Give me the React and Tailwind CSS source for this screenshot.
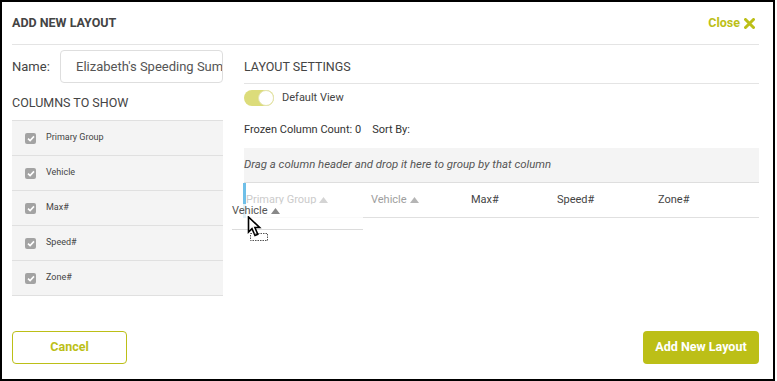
import React from "react";

const OLIVE = "#bcbf17";

function Check() {
  return (
    <span className="w-[11px] h-[11px] rounded-[2px] bg-[#a3a3a3] flex items-center justify-center shrink-0">
      <svg width="8" height="7" viewBox="0 0 8 7">
        <path d="M1 3.6 L3.1 5.6 L7 1.4" stroke="#fff" strokeWidth="1.6" fill="none" />
      </svg>
    </span>
  );
}

function Tri({ color }) {
  return (
    <svg width="9" height="6" viewBox="0 0 9 6" className="ml-[3px]">
      <path d="M0 6 L4.5 0 L9 6 Z" fill={color} />
    </svg>
  );
}

export default function App() {
  const cols = ["Primary Group", "Vehicle", "Max#", "Speed#", "Zone#"];
  return (
    <div className="w-[775px] h-[381px] border-2 border-black bg-white font-['Roboto',sans-serif] flex flex-col">
      {/* header */}
      <div className="ml-[10px] mr-[14px] h-[43px] shrink-0 flex items-center justify-between border-b border-[#e4e4e4]">
        <span className="text-[12.5px] font-bold text-[#444]">ADD NEW LAYOUT</span>
        <span className="flex items-center gap-[4px] pr-[4px] text-[12.5px] font-bold text-[#bcbf17]">
          Close
          <svg width="11" height="11" viewBox="0 0 11 11">
            <path d="M1.5 1.5 L9.5 9.5 M9.5 1.5 L1.5 9.5" stroke={OLIVE} strokeWidth="3" strokeLinecap="round" />
          </svg>
        </span>
      </div>

      {/* body */}
      <div className="ml-[10px] mr-[14px] flex gap-[21px]">
        {/* left */}
        <div className="w-[211px] shrink-0">
          <div className="pt-[5px] flex items-center">
            <span className="w-[48px] text-[13px] text-[#444]">Name:</span>
            <div className="w-[163px] h-[33px] rounded-[4px] border border-[#dedede] pl-[15px] flex items-center overflow-hidden whitespace-nowrap text-[13px] text-[#555]">
              Elizabeth's Speeding Summary
            </div>
          </div>
          <div className="mt-[13px] mb-[10px] text-[12.5px] leading-[14px] text-[#444]">COLUMNS TO SHOW</div>
          <div className="bg-[#f4f4f4] border-t border-[#e0e0e0]">
            {cols.map((c) => (
              <div key={c} className="h-[35px] border-b border-[#e0e0e0] flex items-center pl-[13px] gap-[10px]">
                <Check />
                <span className="text-[9px] text-[#444]">{c}</span>
              </div>
            ))}
          </div>
        </div>

        {/* right */}
        <div className="flex-1">
          <div className="pt-[15px] pb-[9px] border-b border-[#e4e4e4] text-[12.5px] leading-[14px] text-[#444]">
            LAYOUT SETTINGS
          </div>
          <div className="mt-[6px] h-[16px] flex items-center gap-[8px]">
            <span className="w-[30px] h-[16px] rounded-full bg-[#dcdc7a] relative">
              <span className="absolute right-0 top-0 w-[16px] h-[16px] rounded-full bg-white border border-[#e4e4b0]" />
            </span>
            <span className="text-[11px] text-[#444]">Default View</span>
          </div>
          <div className="mt-[18px] leading-[12px] text-[11px] text-[#333] flex gap-[11px]">
            <span>Frozen Column Count: 0</span>
            <span>Sort By:</span>
          </div>
          <div className="mt-[12px] h-[35px] bg-[#f4f4f4] border-b border-[#dedede] flex items-center">
            <span className="text-[11.4px] italic text-[#555]">
              Drag a column header and drop it here to group by that column
            </span>
          </div>
          <div className="relative h-[35px] border-b border-[#e0e0e0] flex items-center text-[11px]">
            <span className="self-start w-[3px] -ml-[1px] h-[35px] bg-[#6fbfe8]" />
            <span className="w-[125px] flex items-center text-[#cbcbcb]">
              Primary Group <Tri color="#d4d4d4" />
            </span>
            <span className="w-[100px] flex items-center text-[#9e9e9e]">
              Vehicle <Tri color="#b5b5b5" />
            </span>
            <span className="w-[86px] text-[#444]">Max#</span>
            <span className="w-[101px] text-[#444]">Speed#</span>
            <span className="text-[#444]">Zone#</span>

            {/* drag ghost */}
            <div className="absolute left-[-12px] top-[21px] w-[131px] h-[26px] pt-[1px] bg-white/80 border-b border-[#dcdcdc]">
              <span className="flex items-center text-[11px] leading-[12px] text-[#555]">
                Vehicle <Tri color="#888" />
              </span>
            </div>
            {/* cursor */}
            <svg className="absolute left-[3px] top-[33px]" width="26" height="26" viewBox="0 0 26 26">
              <path d="M1.5 1 L1.5 16 L5 12.6 L8 19.5 L10.8 18.3 L7.9 11.5 L12.6 11.5 Z" fill="#fff" stroke="#000" strokeWidth="1.6" strokeLinejoin="miter" />
              <rect x="3.5" y="17.5" width="17" height="7" fill="none" stroke="#555" strokeWidth="1" strokeDasharray="1.5 1" />
            </svg>
          </div>
        </div>
      </div>

      {/* footer */}
      <div className="mt-auto mb-[15px] ml-[10px] mr-[14px] flex justify-between">
        <button className="w-[115px] h-[33px] rounded-[4px] border border-[#bcbf17] text-[12.5px] font-bold text-[#bcbf17] bg-white">
          Cancel
        </button>
        <button className="w-[116px] h-[33px] rounded-[4px] bg-[#bcbf17] text-[12.5px] font-bold text-white">
          Add New Layout
        </button>
      </div>
    </div>
  );
}
